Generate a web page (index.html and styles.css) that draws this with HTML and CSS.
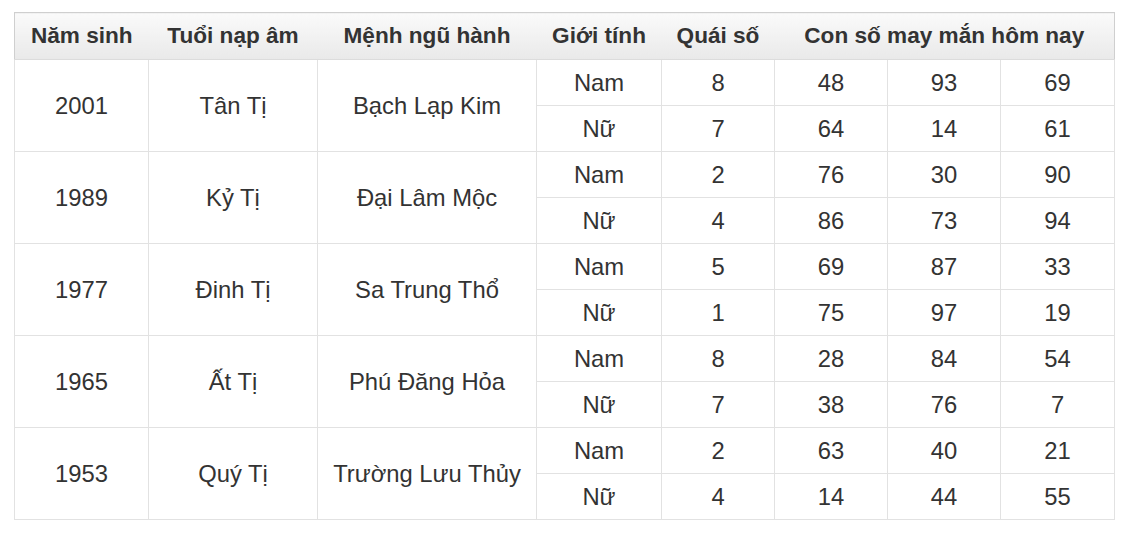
FILE: index.html
```html
<!DOCTYPE html>
<html lang="vi">
<head>
<meta charset="utf-8">
<link rel="stylesheet" href="styles.css">
</head>
<body>
<div class="wrap">
<table class="tbl">
<colgroup>
<col class="c1"><col class="c2"><col class="c3"><col class="c4"><col class="c5"><col class="c6"><col class="c7"><col class="c8">
</colgroup>
<thead>
<tr><th>Năm sinh</th><th>Tuổi nạp âm</th><th>Mệnh ngũ hành</th><th>Giới tính</th><th>Quái số</th><th colspan="3">Con số may mắn hôm nay</th></tr>
</thead>
<tbody>
<tr><td rowspan="2">2001</td><td rowspan="2">Tân Tị</td><td rowspan="2">Bạch Lạp Kim</td><td>Nam</td><td>8</td><td>48</td><td>93</td><td>69</td></tr>
<tr><td>Nữ</td><td>7</td><td>64</td><td>14</td><td>61</td></tr>
<tr><td rowspan="2">1989</td><td rowspan="2">Kỷ Tị</td><td rowspan="2">Đại Lâm Mộc</td><td>Nam</td><td>2</td><td>76</td><td>30</td><td>90</td></tr>
<tr><td>Nữ</td><td>4</td><td>86</td><td>73</td><td>94</td></tr>
<tr><td rowspan="2">1977</td><td rowspan="2">Đinh Tị</td><td rowspan="2">Sa Trung Thổ</td><td>Nam</td><td>5</td><td>69</td><td>87</td><td>33</td></tr>
<tr><td>Nữ</td><td>1</td><td>75</td><td>97</td><td>19</td></tr>
<tr><td rowspan="2">1965</td><td rowspan="2">Ất Tị</td><td rowspan="2">Phú Đăng Hỏa</td><td>Nam</td><td>8</td><td>28</td><td>84</td><td>54</td></tr>
<tr><td>Nữ</td><td>7</td><td>38</td><td>76</td><td>7</td></tr>
<tr><td rowspan="2">1953</td><td rowspan="2">Quý Tị</td><td rowspan="2">Trường Lưu Thủy</td><td>Nam</td><td>2</td><td>63</td><td>40</td><td>21</td></tr>
<tr><td>Nữ</td><td>4</td><td>14</td><td>44</td><td>55</td></tr>
</tbody>
</table>
</div>
</body>
</html>
```

FILE: styles.css
```css
html, body {
  margin: 0;
  padding: 0;
  background: #fff;
}
.wrap {
  padding: 12px 0 0 14px;
}
.tbl {
  border-collapse: collapse;
  table-layout: fixed;
  width: 1100px;
  font-family: "Liberation Sans", Arial, sans-serif;
  font-size: 23.8px;
  color: #333;
}
.c1 { width: 134px; }
.c2 { width: 169px; }
.c3 { width: 219px; }
.c4 { width: 125px; }
.c5 { width: 113px; }
.c6 { width: 113px; }
.c7 { width: 113px; }
.c8 { width: 114px; }
.tbl th {
  height: 46px;
  padding: 0;
  font-size: 22.6px;
  font-weight: bold;
  text-align: center;
  vertical-align: middle;
  background: linear-gradient(#fafafa, #e9e9e9);
  border-top: 1px solid #cfcfcf;
  border-bottom: 1px solid #dcdcdc;
}
.tbl th:first-child { border-left: 1px solid #cfcfcf; }
.tbl th:last-child { border-right: 1px solid #cfcfcf; }
.tbl td {
  height: 45px;
  padding: 0;
  text-align: center;
  vertical-align: middle;
  border: 1px solid #e2e2e2;
}
```
